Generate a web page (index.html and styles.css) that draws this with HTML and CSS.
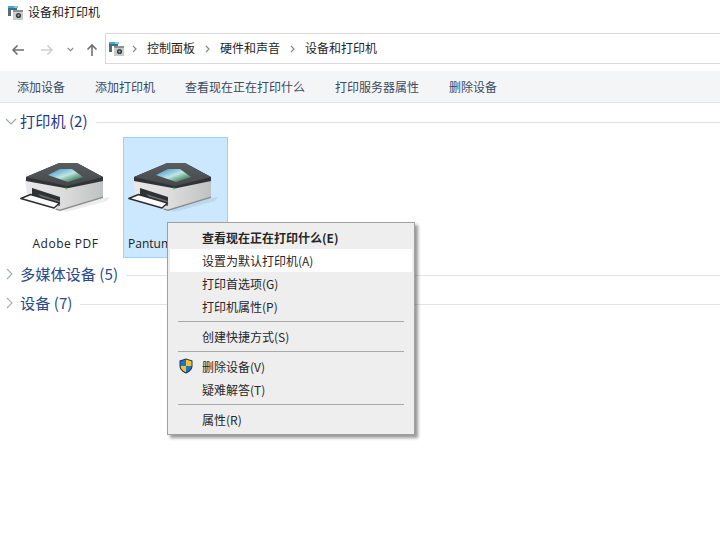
FILE: index.html
```html
<!DOCTYPE html>
<html lang="zh-CN">
<head>
    <meta charset="UTF-8">
    <title>设备和打印机</title>
    <link rel="stylesheet" href="styles.css">
</head>
<body>
    <svg class="defs" width="0" height="0">
        <defs>
            <linearGradient id="bodyFill" x1="0" x2="1" y1="0" y2="0">
                <stop offset="0" stop-color="#e9e9e9"/>
                <stop offset=".5" stop-color="#dcdcdc"/>
                <stop offset="1" stop-color="#c0c1c1"/>
            </linearGradient>
            <linearGradient id="topFill" x1="0" x2="0" y1="0" y2="1">
                <stop offset="0" stop-color="#5a5d60"/>
                <stop offset="1" stop-color="#45474a"/>
            </linearGradient>
            <linearGradient id="screenFill" x1="0" x2="1" y1="0" y2="1">
                <stop offset="0" stop-color="#2f8ac8"/>
                <stop offset=".5" stop-color="#bfe6e4"/>
                <stop offset=".75" stop-color="#5f9a7c"/>
                <stop offset="1" stop-color="#2d5f86"/>
            </linearGradient>
        </defs>
        <symbol id="devices" viewBox="0 0 17 15">
            <path d="M1 3h9v2H9v5H6V5H1z" fill="#3f6f86"/>
            <path d="M1 1h10v2H1z" fill="#46a6d8"/>
            <path d="M7 1h4v2H7z" fill="#7fd0c8"/>
            <path d="M1 5h3v6H1z" fill="#5b6b74"/>
            <path d="M6 5h10v10H6z" fill="#c9cccd"/>
            <path d="M6 5h10v2H6z" fill="#8b9093"/>
            <circle cx="11.500" cy="10.500" r="2.600" fill="#3c4042"/>
            <circle cx="11.500" cy="10.500" r="1" fill="#a8adb0"/>
        </symbol>
        <symbol id="printer" viewBox="0 0 90 55">
            <path d="M42 50 L84 38 L90 37 L87 41 L46 52 Z" fill="#000" opacity=".07"/>
            <path d="M5 20 L47 29 L83 20 L83 37 L40 50 L36 49 L36 44 L7 34 Z" fill="url(#bodyFill)"/>
            <path d="M36 48.500 L40 49.500 L83 36.500 L83 38 L40 51 L35 49.500 Z" fill="#8a8b8b"/>
            <path d="M12 28 L40 37 L40 46 L12 36 Z" fill="#303134"/>
            <path d="M18 34 L40 41 L40 46 L24 40 Z" fill="#6a6b6d"/>
            <path d="M.8 38.500 L10.500 34.500 L39.500 43 L34 48 Z" fill="#fbfbfb" stroke="#2b2c2e" stroke-width="1.400" stroke-linejoin="round"/>
            <path d="M6 17 L38 3.500 Q39 3 40 3 L56 3 Q57 3 58 3.500 L83 17 L83 21 L47 28.500 L6 21 Z" fill="#323336"/>
            <path d="M6 17 L38 3.500 Q39 3 40 3 L56 3 Q57 3 58 3.500 L83 17 L47 26 Z" fill="url(#topFill)"/>
            <path d="M28 15 L40 9 L52 9 L63 17 L48 22 Z" fill="url(#screenFill)"/>
            <circle cx="46" cy="28.500" r="1.100" fill="#4cc46e"/>
        </symbol>
    </svg>

    <div class="titlebar">
        <svg class="icon-small"><use href="#devices"/></svg>
        <span>设备和打印机</span>
    </div>

    <div class="navbar">
        <div class="nav-buttons">
            <svg class="nav-arrow" viewBox="0 0 14 12"><path d="M13 6H2M6.500 1.500 2 6l4.500 4.500" fill="none" stroke="#6f6f6f" stroke-width="1.600"/></svg>
            <svg class="nav-arrow forward" viewBox="0 0 14 12"><path d="M1 6h11M7.500 1.500 12 6l-4.500 4.500" fill="none" stroke="#cfcfcf" stroke-width="1.600"/></svg>
            <svg class="nav-drop" viewBox="0 0 7 5"><path d="M.8 1 3.500 3.600 6.200 1" fill="none" stroke="#8a8a8a" stroke-width="1.200"/></svg>
            <svg class="nav-arrow up" viewBox="0 0 12 14"><path d="M6 13V2M1.500 6.500 6 2l4.500 4.500" fill="none" stroke="#6f6f6f" stroke-width="1.600"/></svg>
        </div>
        <div class="address">
            <svg class="icon-small"><use href="#devices"/></svg>
            <svg class="crumb-sep" viewBox="0 0 5 8"><path d="M1 1l3 3-3 3" fill="none" stroke="#8a8a8a" stroke-width="1.200"/></svg>
            <span>控制面板</span>
            <svg class="crumb-sep" viewBox="0 0 5 8"><path d="M1 1l3 3-3 3" fill="none" stroke="#8a8a8a" stroke-width="1.200"/></svg>
            <span>硬件和声音</span>
            <svg class="crumb-sep" viewBox="0 0 5 8"><path d="M1 1l3 3-3 3" fill="none" stroke="#8a8a8a" stroke-width="1.200"/></svg>
            <span>设备和打印机</span>
        </div>
    </div>

    <div class="toolbar">
        <span>添加设备</span>
        <span>添加打印机</span>
        <span>查看现在正在打印什么</span>
        <span>打印服务器属性</span>
        <span>删除设备</span>
    </div>

    <div class="content">
        <div class="group-head">
            <svg class="chevron" viewBox="0 0 12 7"><path d="M1 1l5 5 5-5" fill="none" stroke="#9aa3ad" stroke-width="1.100"/></svg>
            <span>打印机 (2)</span>
            <div class="group-line"></div>
        </div>
        <div class="tiles">
            <div class="tile">
                <svg class="printer"><use href="#printer"/></svg>
                <div class="tile-name center">Adobe PDF</div>
            </div>
            <div class="tile selected">
                <svg class="printer"><use href="#printer"/></svg>
                <div class="tile-name">Pantum</div>
            </div>
        </div>
        <div class="group-head collapsed media">
            <svg class="chevron right" viewBox="0 0 7 12"><path d="M1 1l5 5-5 5" fill="none" stroke="#a6adb5" stroke-width="1.100"/></svg>
            <span>多媒体设备 (5)</span>
            <div class="group-line"></div>
        </div>
        <div class="group-head collapsed">
            <svg class="chevron right" viewBox="0 0 7 12"><path d="M1 1l5 5-5 5" fill="none" stroke="#a6adb5" stroke-width="1.100"/></svg>
            <span>设备 (7)</span>
            <div class="group-line"></div>
        </div>
    </div>

    <div class="menu">
        <div class="menu-item bold">查看现在正在打印什么(E)</div>
        <div class="menu-item active">设置为默认打印机(A)</div>
        <div class="menu-item">打印首选项(G)</div>
        <div class="menu-item">打印机属性(P)</div>
        <div class="menu-sep"></div>
        <div class="menu-item">创建快捷方式(S)</div>
        <div class="menu-sep"></div>
        <div class="menu-item">
            <svg class="shield" viewBox="0 0 14 16">
                <path d="M7 .5 13.500 2.500V8c0 3.500-3 6-6.500 7.500C3.500 14 .5 11.500.5 8V2.500z" fill="#24344f"/>
                <path d="M7 1.600 1.500 3.300V8H7z" fill="#1f74c9"/>
                <path d="M7 1.600 12.500 3.300V8H7z" fill="#f4c430"/>
                <path d="M1.500 8H7v6.300C4 13 1.500 11 1.500 8z" fill="#f4c430"/>
                <path d="M12.500 8H7v6.300C10 13 12.500 11 12.500 8z" fill="#1f74c9"/>
            </svg>
            删除设备(V)
        </div>
        <div class="menu-item">疑难解答(T)</div>
        <div class="menu-sep"></div>
        <div class="menu-item">属性(R)</div>
    </div>
</body>
</html>
```

FILE: styles.css
```css
body {
    margin: 0;
    background-color: #fff;
    color: #1a1a1a;
    font-family: "Noto Sans CJK SC", "Liberation Sans", sans-serif;
    font-size: 12px;
    overflow: hidden;
}
.defs {
    display: block;
    height: 0;
}
.icon-small {
    width: 17px;
    height: 15px;
    flex: none;
}
.titlebar {
    display: flex;
    align-items: center;
    gap: 4px;
    height: 25px;
    padding-left: 7px;
}
.titlebar span,
.address span {
    margin-bottom: 2px;
}
.navbar {
    display: flex;
    height: 31px;
    margin-top: 8px;
}
.nav-buttons {
    display: flex;
    align-items: center;
    width: 105px;
    padding: 2px 0 0 11px;
    box-sizing: border-box;
}
.nav-arrow {
    width: 14px;
    height: 12px;
}
.nav-arrow.forward {
    margin-left: 15px;
}
.nav-arrow.up {
    width: 12px;
    height: 14px;
    margin-left: 12px;
}
.nav-drop {
    width: 7px;
    height: 5px;
    margin-left: 13px;
}
.address {
    flex: 1;
    display: flex;
    align-items: center;
    border: 1px solid #d9d9d9;
    border-right: none;
    padding-left: 2px;
    color: #1e1e1e;
}
.crumb-sep {
    width: 5px;
    height: 8px;
    margin: 0 10px;
}
.address .icon-small + .crumb-sep {
    margin-left: 7px;
}
.toolbar {
    display: flex;
    align-items: center;
    gap: 30px;
    height: 31px;
    margin-top: 7px;
    padding-left: 17px;
    background-color: #f4f5f7;
    border-bottom: 1px solid #e3e5e8;
    color: #3a4a5f;
}
.content {
    padding-top: 7px;
}
.group-head {
    display: flex;
    align-items: center;
    height: 20px;
    color: #1e3a8a;
    font-size: 15.2px;
}
.group-head.collapsed {
    margin-top: 9px;
    color: #2a4a8c;
}
.group-head.media {
    margin-top: 5px;
}
.chevron {
    width: 12px;
    height: 7px;
    margin: 2px 3px 0 5px;
    flex: none;
}
.chevron.right {
    width: 7px;
    height: 12px;
    margin: 2px 7px 0 6px;
}
.group-line {
    flex: 1;
    height: 1px;
    margin: 4px 0 0 8px;
    background-color: #e3e3e3;
}
.tiles {
    display: flex;
    gap: 3px;
    margin: 7px 0 0 15px;
}
.tile {
    width: 105px;
    height: 121px;
    box-sizing: border-box;
    border: 1px solid transparent;
    padding-top: 22px;
}
.tile.selected {
    background-color: #cce8ff;
    border-color: #99d1ff;
}
.printer {
    display: block;
    width: 90px;
    height: 55px;
    margin-left: 4px;
}
.tile-name {
    margin-top: 20px;
    padding-left: 4px;
    font-family: "Open Sans", "Liberation Sans", sans-serif;
    font-size: 12px;
    color: #222;
    white-space: nowrap;
}
.tile-name.center {
    padding: 0 4px 0 0;
    text-align: center;
    letter-spacing: .5px;
}
.menu {
    position: absolute;
    left: 167px;
    top: 222px;
    width: 248px;
    box-sizing: border-box;
    padding: 3px 2px;
    background-color: #eeeeee;
    border: 1px solid #a0a0a0;
    box-shadow: 3px 3px 3px rgba(0, 0, 0, .4);
    color: #262626;
}
.menu-item {
    position: relative;
    height: 23px;
    line-height: 23px;
    padding-left: 32px;
}
.menu-item.bold {
    font-weight: 700;
}
.menu-item.active {
    background-color: #fff;
}
.menu-sep {
    height: 1px;
    margin: 3px 8px 3px 8px;
    background-color: #a9a9a9;
}
.shield {
    position: absolute;
    left: 9px;
    top: 3px;
    width: 14px;
    height: 16px;
}
```
